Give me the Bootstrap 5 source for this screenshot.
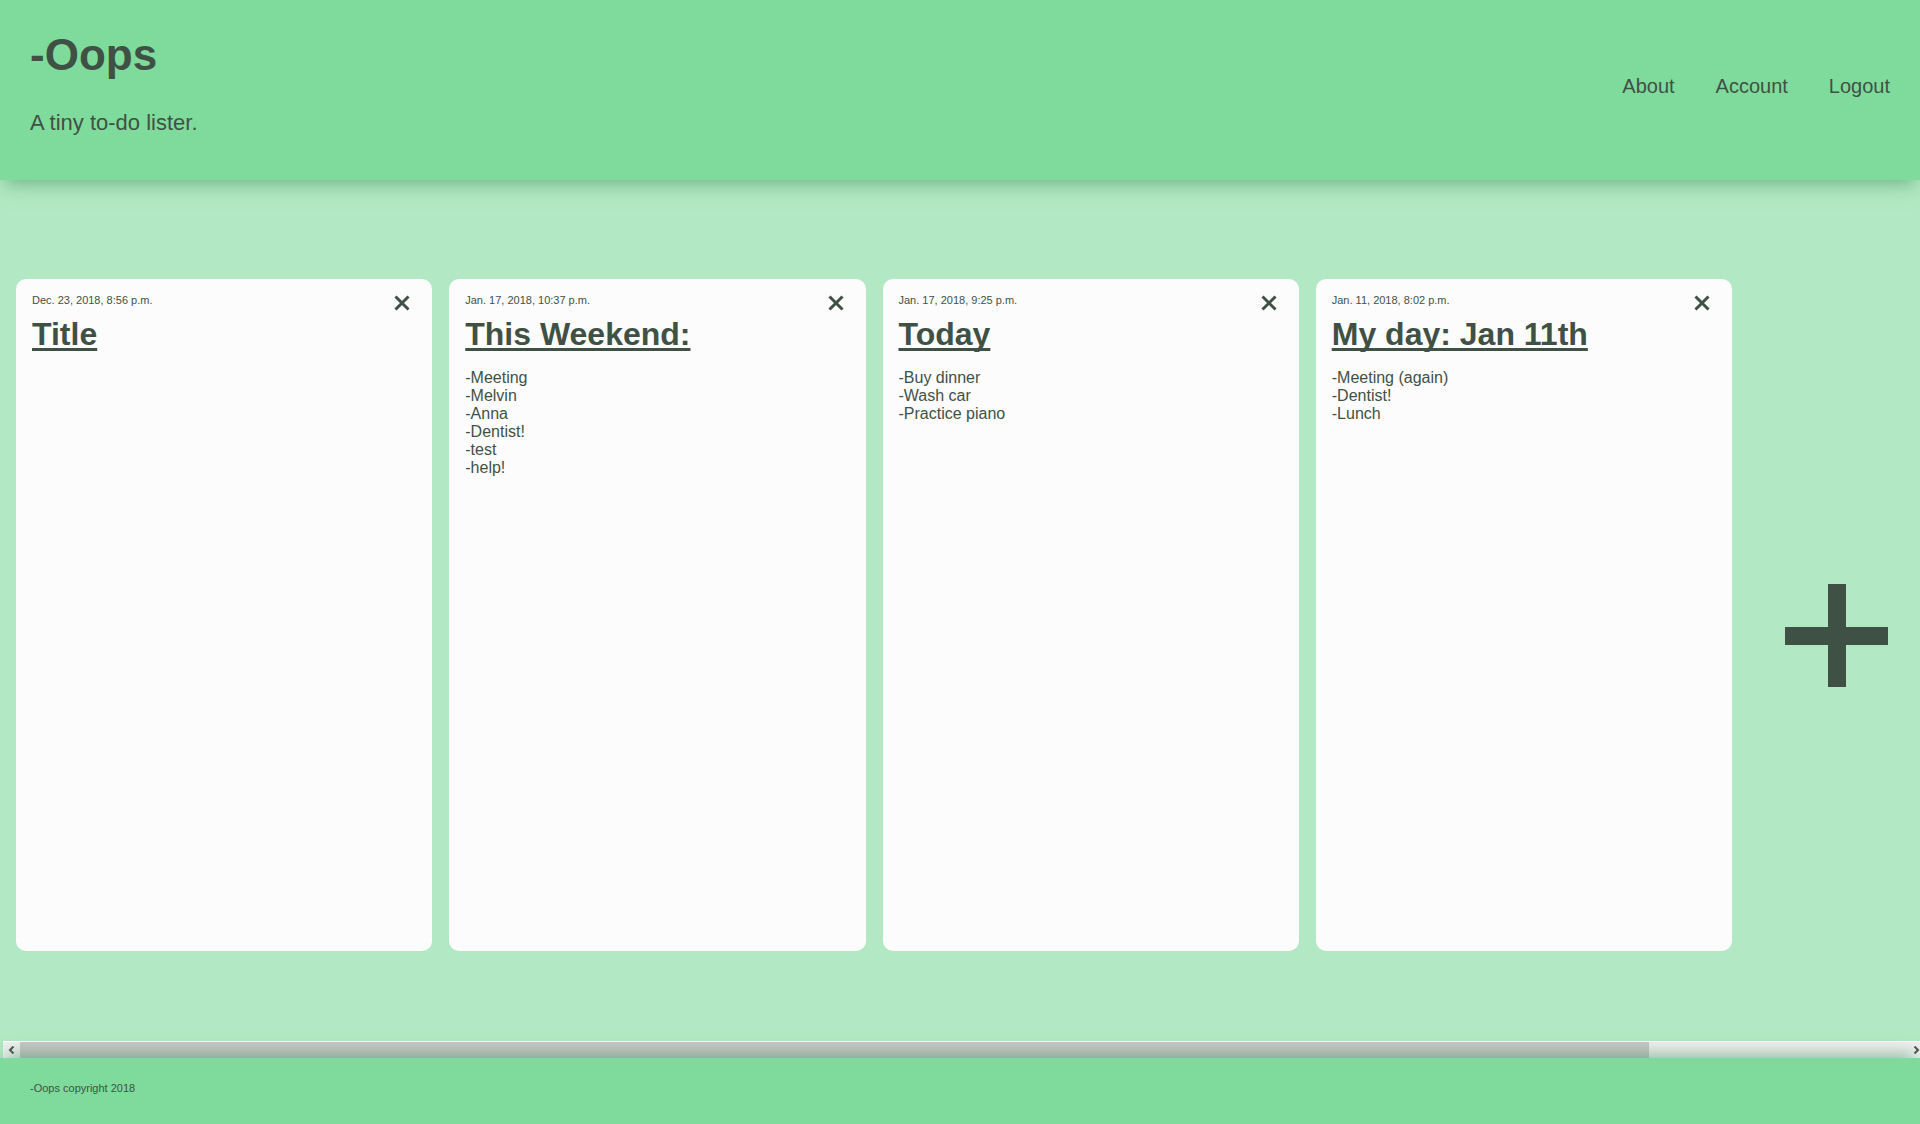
<!DOCTYPE html>
<html lang="en">
<head>
<meta charset="utf-8">
<meta name="viewport" content="width=device-width, initial-scale=1">
<title>-Oops</title>
<link rel="stylesheet" href="https://cdn.jsdelivr.net/npm/bootstrap@5.3.0/dist/css/bootstrap.min.css">
<style>
  :root { --ink: #3f5145; --leaf: #7fdb9c; --mint: #b2e9c4; --shade: rgba(50, 130, 80, .5); }
  body { font-family: "Liberation Sans", Arial, sans-serif; color: var(--ink); background: var(--mint); }
  a, .btn, .btn:hover { color: var(--ink); }
  .site-head { background: var(--leaf); padding: 30px 30px 45px; box-shadow: 0 9px 18px -5px var(--shade); }
  .brand-name { font-size: 44px; line-height: 50px; font-weight: 700; margin-bottom: 31px; }
  .tagline { font-size: 22px; line-height: 24px; }
  .site-nav { font-size: 20px; line-height: 24px; gap: 41px; padding-top: 6px; }
  .board { padding: 99px 0 90px 16px; }
  .notes { gap: 17px; }
  .note { flex: 1 1 0; min-width: 260px; border: 0; border-radius: 10px; background: #fcfcfc; color: var(--ink); padding: 16px; }
  .note time { font-size: 11px; line-height: 11px; }
  .note h2 { font-size: 32px; line-height: 36px; font-weight: 700; margin: 5px 0 17px; }
  .note h2 a { text-decoration: underline; text-decoration-thickness: 3px; text-underline-offset: 3px; text-decoration-skip-ink: none; }
  .note li { font-size: 16px; line-height: 18px; }
  .note-close { width: 16px; height: 16px; margin-right: 6px; }
  .add-col { width: 188px; padding: 41px 0 0 21px; }
  .scroll-row { height: 17px; margin-left: 3px; background: #f1f1f1; border-top: 1px solid #fff; }
  .scroll-row button { width: 17px; background: #f1f1f1; }
  .scroll-row .scroll-end { padding-right: 2px; }
  .scroll-thumb { width: 86.5%; background: #c8c8c8; }
  .site-foot { background: var(--leaf); padding: 21px 30px 27px; font-size: 11px; line-height: 18px; box-shadow: 0 -9px 18px -5px var(--shade); z-index: 1; }
</style>
<script src="https://cdn.jsdelivr.net/npm/bootstrap@5.3.0/dist/js/bootstrap.bundle.min.js"></script>
</head>
<body>
<div class="d-flex flex-column min-vh-100">
  <header class="site-head d-flex justify-content-between align-items-center">
    <div>
      <h1 class="brand-name">-Oops</h1>
      <p class="tagline mb-0">A tiny to-do lister.</p>
    </div>
    <nav class="site-nav d-flex">
      <a class="text-decoration-none" href="#about">About</a>
      <a class="text-decoration-none" href="#account">Account</a>
      <a class="text-decoration-none" href="#logout">Logout</a>
    </nav>
  </header>

  <main class="board d-flex flex-grow-1">
    <div class="notes d-flex flex-grow-1">
      <article class="card note">
        <div class="d-flex justify-content-between">
          <time>Dec. 23, 2018, 8:56 p.m.</time>
          <button class="note-close btn p-0 border-0 d-flex" type="button" aria-label="Delete Title"><svg width="16" height="16" viewBox="0 0 16 16" stroke="currentColor" stroke-width="3"><path d="M1.500 1.500l13 13M14.500 1.500l-13 13"/></svg></button>
        </div>
        <h2><a href="#title">Title</a></h2>
      </article>
      <article class="card note">
        <div class="d-flex justify-content-between">
          <time>Jan. 17, 2018, 10:37 p.m.</time>
          <button class="note-close btn p-0 border-0 d-flex" type="button" aria-label="Delete This Weekend"><svg width="16" height="16" viewBox="0 0 16 16" stroke="currentColor" stroke-width="3"><path d="M1.500 1.500l13 13M14.500 1.500l-13 13"/></svg></button>
        </div>
        <h2><a href="#weekend">This Weekend:</a></h2>
        <ul class="list-unstyled mb-0">
          <li>-Meeting</li>
          <li>-Melvin</li>
          <li>-Anna</li>
          <li>-Dentist!</li>
          <li>-test</li>
          <li>-help!</li>
        </ul>
      </article>
      <article class="card note">
        <div class="d-flex justify-content-between">
          <time>Jan. 17, 2018, 9:25 p.m.</time>
          <button class="note-close btn p-0 border-0 d-flex" type="button" aria-label="Delete Today"><svg width="16" height="16" viewBox="0 0 16 16" stroke="currentColor" stroke-width="3"><path d="M1.500 1.500l13 13M14.500 1.500l-13 13"/></svg></button>
        </div>
        <h2><a href="#today">Today</a></h2>
        <ul class="list-unstyled mb-0">
          <li>-Buy dinner</li>
          <li>-Wash car</li>
          <li>-Practice piano</li>
        </ul>
      </article>
      <article class="card note">
        <div class="d-flex justify-content-between">
          <time>Jan. 11, 2018, 8:02 p.m.</time>
          <button class="note-close btn p-0 border-0 d-flex" type="button" aria-label="Delete My day"><svg width="16" height="16" viewBox="0 0 16 16" stroke="currentColor" stroke-width="3"><path d="M1.500 1.500l13 13M14.500 1.500l-13 13"/></svg></button>
        </div>
        <h2><a href="#my-day">My day: Jan 11th</a></h2>
        <ul class="list-unstyled mb-0">
          <li>-Meeting (again)</li>
          <li>-Dentist!</li>
          <li>-Lunch</li>
        </ul>
      </article>
    </div>
    <div class="add-col d-flex align-items-center justify-content-center flex-shrink-0">
      <button class="btn p-0 border-0 d-flex" type="button" aria-label="Add a list"><svg width="103" height="103" viewBox="0 0 103 103" fill="currentColor"><path d="M43 0h18v43h42v18H61v42H43V61H0V43h43z"/></svg></button>
    </div>
  </main>

  <div class="scroll-row d-flex">
    <button class="border-0 p-0 d-flex align-items-center justify-content-center" type="button" aria-label="Scroll left"><svg width="7" height="8" viewBox="0 0 7 8" fill="none" stroke="#505050" stroke-width="2"><path d="M5.500 .5L2 4l3.500 3.500"/></svg></button>
    <div class="flex-grow-1 d-flex"><div class="scroll-thumb"></div></div>
    <button class="scroll-end border-0 p-0 d-flex align-items-center justify-content-end" type="button" aria-label="Scroll right"><svg width="7" height="8" viewBox="0 0 7 8" fill="none" stroke="#505050" stroke-width="2"><path d="M1.500 .5L5 4 1.500 7.500"/></svg></button>
  </div>

  <footer class="site-foot position-relative">-Oops copyright 2018</footer>
</div>
</body>
</html>
